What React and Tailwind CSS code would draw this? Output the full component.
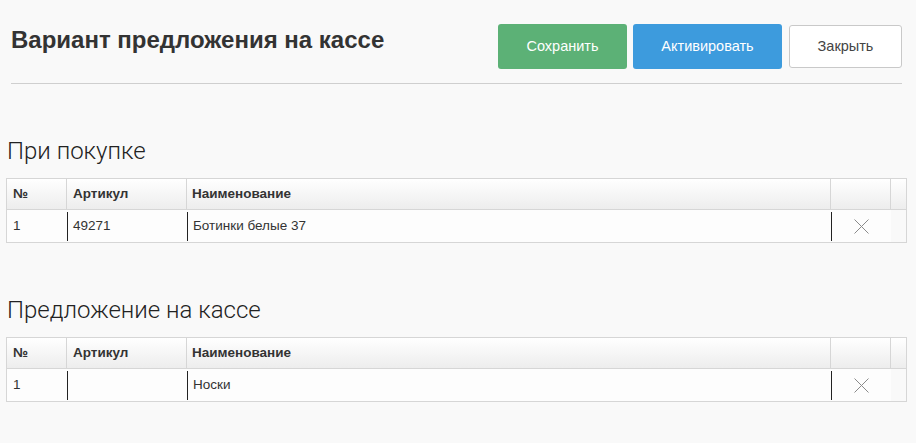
import { useState } from 'react'

const sections = [
  { title: 'При покупке', rows: [{ n: '1', sku: '49271', name: 'Ботинки белые 37' }] },
  { title: 'Предложение на кассе', rows: [{ n: '1', sku: '', name: 'Носки' }] },
]

function CloseIcon() {
  return (
    <svg width="15" height="15" viewBox="0 0 15 15" fill="none">
      <path d="M0.5 0.5L14.5 14.5M14.5 0.5L0.5 14.5" stroke="#8a8a8a" strokeWidth="1" />
    </svg>
  )
}

function ItemsTable({ rows }) {
  return (
    <div className="ml-[6px] w-[901px] border border-[#d6d6d6] text-[13.5px] text-[#333]">
      <div className="grid grid-cols-[60px_120px_644px_60px_1fr] h-[31px] bg-gradient-to-b from-white to-[#ededed] border-b border-[#d6d6d6] font-bold">
        <div className="flex items-center pl-[6px] border-r border-[#d6d6d6]">№</div>
        <div className="flex items-center pl-[6px] border-r border-[#d6d6d6]">Артикул</div>
        <div className="flex items-center pl-[5px] border-r border-[#d6d6d6]">Наименование</div>
        <div className="border-r border-[#d6d6d6]"></div>
        <div></div>
      </div>
      {rows.map((row, i) => (
        <div key={i} className="grid grid-cols-[60px_120px_644px_60px_1fr] h-[32px]">
          <div className="flex items-center pl-[6px] bg-[#fdfdfd]">{row.n}</div>
          <div className="bg-[#fdfdfd] pt-[2px] pb-[1px]">
            <div className="h-full flex items-center pl-[5px] border-l border-[#222]">{row.sku}</div>
          </div>
          <div className="bg-[#fdfdfd] pt-[2px] pb-[1px]">
            <div className="h-full flex items-center pl-[5px] border-l border-[#222]">{row.name}</div>
          </div>
          <div className="bg-[#fdfdfd] pt-[2px] pb-[1px]">
            <div className="h-full flex items-center justify-center border-l border-[#222] pr-[1px]">
              <CloseIcon />
            </div>
          </div>
          <div className="bg-[#f9f9f9]"></div>
        </div>
      ))}
    </div>
  )
}

export default function App() {
  const [active] = useState(false)

  return (
    <div className="min-h-[443px] bg-[#f9f9f9] font-['Liberation_Sans',Arial,sans-serif]">
      {/* Header */}
      <div className="ml-[11px] mr-[14px] h-[84px] flex justify-between border-b border-[#cfcfcf]">
        <h1 className="pt-[26px] text-[24px] leading-[28px] font-bold text-[#333]">
          Вариант предложения на кассе
        </h1>
        <div className="flex gap-[6px] pt-[24px]">
          <button className="h-[45px] w-[129px] rounded-[3px] bg-[#5cb176] text-white text-[14.5px]">
            Сохранить
          </button>
          <button className="h-[45px] w-[149px] rounded-[3px] bg-[#3d9bdd] text-white text-[14.5px]">
            {active ? 'Деактивировать' : 'Активировать'}
          </button>
          <button className="ml-[1px] mt-[1px] h-[43px] w-[113px] rounded-[3px] border border-[#c9c9c9] bg-white text-[#444] text-[14.5px]">
            Закрыть
          </button>
        </div>
      </div>

      {sections.map((s, i) => (
        <div key={i} className={i === 0 ? 'pt-[53px]' : 'pt-[53px]'}>
          <h2 className="ml-[7px] mb-[13px] text-[24px] leading-[28px] font-light text-[#222] font-['Roboto',sans-serif]">
            {s.title}
          </h2>
          <ItemsTable rows={s.rows} />
        </div>
      ))}
    </div>
  )
}
